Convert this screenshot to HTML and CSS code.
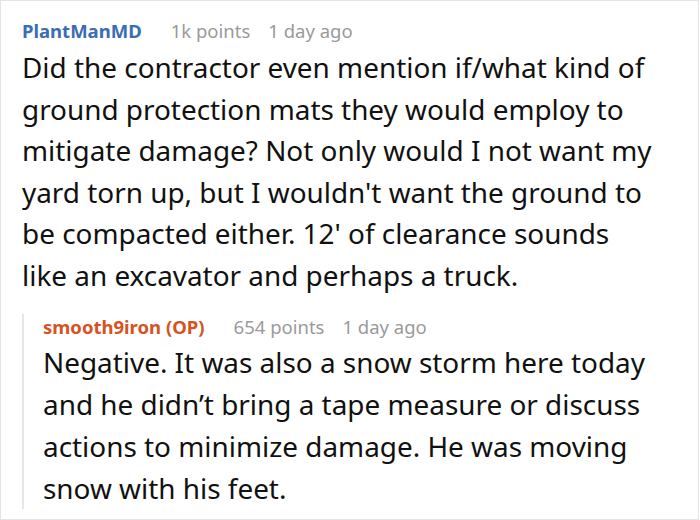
FILE: index.html
```html
<!DOCTYPE html>
<html>
<head>
<meta charset="utf-8">
<link rel="stylesheet" href="styles.css">
</head>
<body>
<div class="frame">
  <div class="comment">
    <div class="meta">
      <span class="author">PlantManMD</span>
      <span class="points">1k points</span>
      <span class="time">1 day ago</span>
    </div>
    <p class="text">Did the contractor even mention if/what kind of ground protection mats they would employ to mitigate damage? Not only would I not want my yard torn up, but I wouldn't want the ground to be compacted either. 12' of clearance sounds like an excavator and perhaps a truck.</p>
    <div class="reply">
      <div class="meta">
        <span class="author op">smooth9iron (OP)</span>
        <span class="points">654 points</span>
        <span class="time">1 day ago</span>
      </div>
      <p class="text">Negative. It was also a snow storm here today and he didn’t bring a tape measure or discuss actions to minimize damage. He was moving snow with his feet.</p>
    </div>
  </div>
</div>
</body>
</html>
```

FILE: styles.css
```css
html, body {
  margin: 0;
  padding: 0;
  background: #ffffff;
}

.frame {
  box-sizing: border-box;
  width: 699px;
  height: 520px;
  border: 1px solid #e4e4e4;
  overflow: hidden;
  font-family: "Noto Sans", "Open Sans", sans-serif;
  color: #1a1a1a;
}

.comment {
  width: 637px;
  padding: 17px 0 0 21px;
}

.meta {
  display: flex;
  align-items: baseline;
  font-size: 18.5px;
  line-height: 26px;
}

.author {
  font-weight: 700;
  color: #3a6db5;
  margin-right: 29px;
}

.author.op {
  color: #d6531f;
  margin-right: 29px;
}

.points {
  color: #9a9a9a;
  margin-right: 18px;
}

.time {
  color: #9a9a9a;
}

.text {
  margin: 3px 0 0 0;
  font-size: 27.9px;
  line-height: 41.6px;
  color: #111111;
}

.reply {
  margin-top: 17px;
  border-left: 2px solid #e6e6e6;
  padding-left: 19px;
}

.reply .text {
  margin-top: 1px;
  line-height: 42.2px;
}
```
